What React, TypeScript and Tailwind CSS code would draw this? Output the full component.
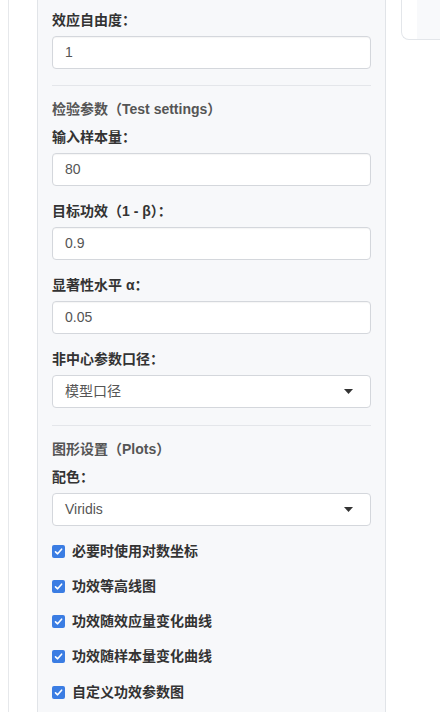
import React from "react"

const FONT = { fontFamily: '"Liberation Sans", "Noto Sans CJK SC", Arial, sans-serif' }

function Label({ children }: { children: React.ReactNode }) {
  return <div className="h-5 leading-5 text-[14px] font-bold text-[#333]">{children}</div>
}

function TextInput({ value }: { value: string }) {
  return (
    <div className="mt-[6px] h-[33px] flex items-center px-3 rounded border border-[#d4d7dc] bg-white text-[14px] text-[#555] shadow-[inset_0_1px_1px_rgba(0,0,0,0.04)]">
      {value}
    </div>
  )
}

function SelectBox({ value }: { value: string }) {
  return (
    <div className="mt-[6px] h-[33px] flex items-center pl-3 pr-[17px] rounded border border-[#d4d7dc] bg-white text-[14px] text-[#555]">
      <span className="flex-1">{value}</span>
      <svg width="9" height="5" viewBox="0 0 9 5">
        <path d="M0 0 L9 0 L4.5 5 Z" fill="#333" />
      </svg>
    </div>
  )
}

function Field({ label, value, select }: { label: string; value: string; select?: boolean }) {
  return (
    <div>
      <Label>{label}</Label>
      {select ? <SelectBox value={value} /> : <TextInput value={value} />}
    </div>
  )
}

function Check({ label }: { label: string }) {
  return (
    <div className="h-5 flex items-center gap-[7px]">
      <div className="w-[13px] h-[13px] rounded-[2px] bg-[#3b7de3] flex items-center justify-center">
        <svg width="9" height="9" viewBox="0 0 9 9">
          <path d="M1.5 4.8 L3.6 6.8 L7.6 2.2" stroke="white" strokeWidth="1.6" fill="none" strokeLinecap="round" strokeLinejoin="round" />
        </svg>
      </div>
      <span className="text-[14px] font-bold text-[#333]">{label}</span>
    </div>
  )
}

export default function App() {
  return (
    <div className="w-[440px] h-[712px] overflow-hidden bg-white flex" style={FONT}>
      <div className="w-[8px] shrink-0" />
      <div className="w-[29px] shrink-0 border-l border-[#e6e8eb]" />
      {/* settings panel */}
      <div className="w-[349px] shrink-0 h-full bg-[#f7f8fa] border-l border-r border-[#e1e4e8] px-[14px] pt-[10px]">
        <Field label="效应自由度：" value="1" />

        <div className="mt-[16px] h-px bg-[#e4e6ea]" />

        <div className="mt-[13px] h-5 leading-5 text-[14px] font-semibold text-[#555]">检验参数（Test settings）</div>
        <div className="mt-[8px] flex flex-col gap-[15px]">
          <Field label="输入样本量：" value="80" />
          <Field label="目标功效（1 - β）：" value="0.9" />
          <Field label="显著性水平 α：" value="0.05" />
          <Field label="非中心参数口径：" value="模型口径" select />
        </div>

        <div className="mt-[17px] h-px bg-[#e4e6ea]" />

        <div className="mt-[13px] h-5 leading-5 text-[14px] font-semibold text-[#555]">图形设置（Plots）</div>
        <div className="mt-[8px]">
          <Field label="配色：" value="Viridis" select />
        </div>
        <div className="mt-[15px] flex flex-col gap-[15.3px]">
          <Check label="必要时使用对数坐标" />
          <Check label="功效等高线图" />
          <Check label="功效随效应量变化曲线" />
          <Check label="功效随样本量变化曲线" />
          <Check label="自定义功效参数图" />
        </div>
      </div>
      {/* right card (cut off) */}
      <div className="ml-[15px] flex-1">
        <div className="h-[40px] bg-white border-l border-b border-[#e3e6ea] rounded-bl-lg pl-[15px]">
          <div className="h-full bg-[#f8f9fb]" />
        </div>
      </div>
    </div>
  )
}
